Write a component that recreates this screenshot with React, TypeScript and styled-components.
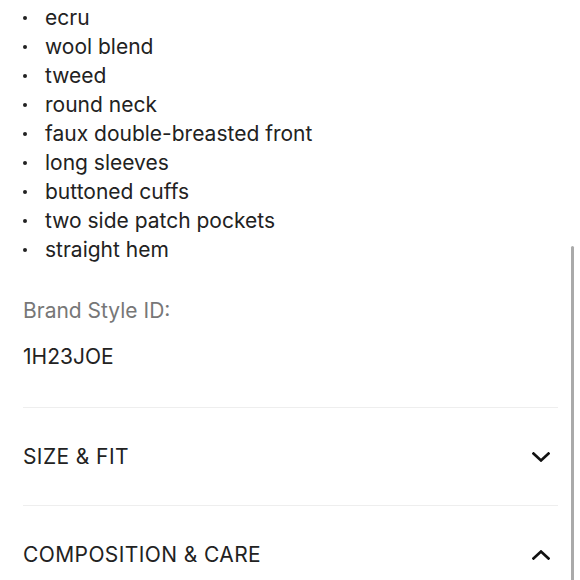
import { createGlobalStyle } from "styled-components";
import styled from "styled-components";

const GlobalStyle = createGlobalStyle`
  html, body {
    margin: 0;
    padding: 0;
    background: #fff;
    overflow: hidden;
  }
  body {
    font-family: Inter, "Noto Sans", sans-serif;
    color: #222;
  }
`;

const Page = styled.div`
  position: relative;
  width: 580px;
  height: 580px;
  overflow: hidden;
`;

const Content = styled.div`
  padding: 0 23px;
  margin-top: 3px;
  width: 535px;
`;

const Bullets = styled.ul`
  list-style: none;
  margin: 0;
  padding: 0;
`;

const Bullet = styled.li`
  display: flex;
  align-items: center;
  height: 29px;
  font-size: 21px;
  color: #222;

  &::before {
    content: "";
    width: 4px;
    height: 4px;
    border-radius: 50%;
    background: #222;
    margin: 0 18px 0 0;
    flex-shrink: 0;
  }
`;

const Label = styled.div`
  margin-top: 33px;
  font-size: 21px;
  color: #777;
  line-height: 28px;
`;

const Value = styled.div`
  margin-top: 18px;
  font-size: 21px;
  color: #222;
  line-height: 28px;
`;

const Section = styled.div<{ $first?: boolean }>`
  border-top: 1px solid #eee;
  margin-top: ${(p) => (p.$first ? "36px" : "0")};
`;

const SectionHeader = styled.div`
  display: flex;
  align-items: center;
  justify-content: space-between;
  height: 97px;
  font-size: 21px;
  letter-spacing: 0.4px;
  color: #222;
  text-transform: uppercase;
`;

const Chevron = styled.svg<{ $up?: boolean }>`
  width: 18px;
  height: 10px;
  margin-right: 8px;
  transform: ${(p) => (p.$up ? "rotate(180deg)" : "none")};
`;

const ScrollThumb = styled.div`
  position: absolute;
  right: 6px;
  top: 246px;
  width: 3px;
  height: 340px;
  border-radius: 2px;
  background: #aaa;
`;

const details = [
  "ecru",
  "wool blend",
  "tweed",
  "round neck",
  "faux double-breasted front",
  "long sleeves",
  "buttoned cuffs",
  "two side patch pockets",
  "straight hem",
];

const Arrow = ({ up }: { up?: boolean }) => (
  <Chevron $up={up} viewBox="0 0 18 10" fill="none">
    <path d="M1.5 1.5L9 8.5L16.5 1.5" stroke="#111" strokeWidth="2.6" strokeLinecap="square" />
  </Chevron>
);

export default function App() {
  return (
    <Page>
      <GlobalStyle />
      <Content>
        <Bullets>
          {details.map((d) => (
            <Bullet key={d}>{d}</Bullet>
          ))}
        </Bullets>
        <Label>Brand Style ID:</Label>
        <Value>1H23JOE</Value>
        <Section $first>
          <SectionHeader>
            Size &amp; Fit
            <Arrow />
          </SectionHeader>
        </Section>
        <Section>
          <SectionHeader>
            Composition &amp; Care
            <Arrow up />
          </SectionHeader>
        </Section>
      </Content>
      <ScrollThumb />
    </Page>
  );
}
